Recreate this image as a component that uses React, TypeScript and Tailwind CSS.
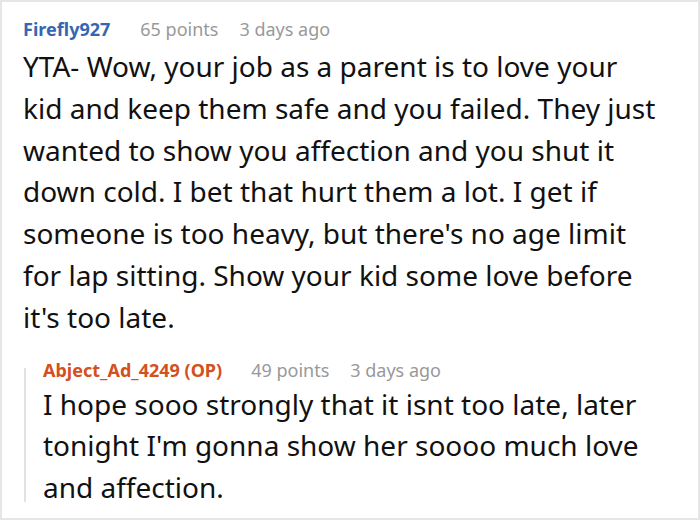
const comment = {
  author: "Firefly927",
  points: 65,
  age: "3 days ago",
  body: "YTA- Wow, your job as a parent is to love your kid and keep them safe and you failed. They just wanted to show you affection and you shut it down cold. I bet that hurt them a lot. I get if someone is too heavy, but there's no age limit for lap sitting. Show your kid some love before it's too late.",
};

const reply = {
  author: "Abject_Ad_4249 (OP)",
  points: 49,
  age: "3 days ago",
  body: "I hope sooo strongly that it isnt too late, later tonight I'm gonna show her soooo much love and affection.",
};

function Meta({ author, points, age, op }: { author: string; points: number; age: string; op?: boolean }) {
  return (
    <div className="flex items-baseline text-[18px] leading-[24px]">
      <span className={op ? "font-bold text-[#d35020] mr-[29px]" : "font-bold text-[#3566b4] mr-[30px]"}>{author}</span>
      <span className="text-[#999] mr-[21px]">{points} points</span>
      <span className="text-[#999]">{age}</span>
    </div>
  );
}

export default function App() {
  return (
    <div className="w-[700px] h-[520px] bg-white border-2 border-[#e6e6e6] overflow-hidden font-['Noto_Sans',sans-serif]">
      <div className="w-[658px] pl-[21px] pt-[15px]">
        <Meta author={comment.author} points={comment.points} age={comment.age} />
        <p className="mt-[5px] text-[28px] leading-[41.8px] text-[#111]">{comment.body}</p>

        <div className="mt-[19px] flex">
          <div className="ml-[1px] mt-[10px] mb-[7px] w-[2px] shrink-0 bg-[#e2e2e2]" />
          <div className="pl-[17px]">
            <Meta author={reply.author} points={reply.points} age={reply.age} op />
            <p className="mt-[2px] text-[28px] leading-[41.8px] text-[#111]">{reply.body}</p>
          </div>
        </div>
      </div>
    </div>
  );
}
